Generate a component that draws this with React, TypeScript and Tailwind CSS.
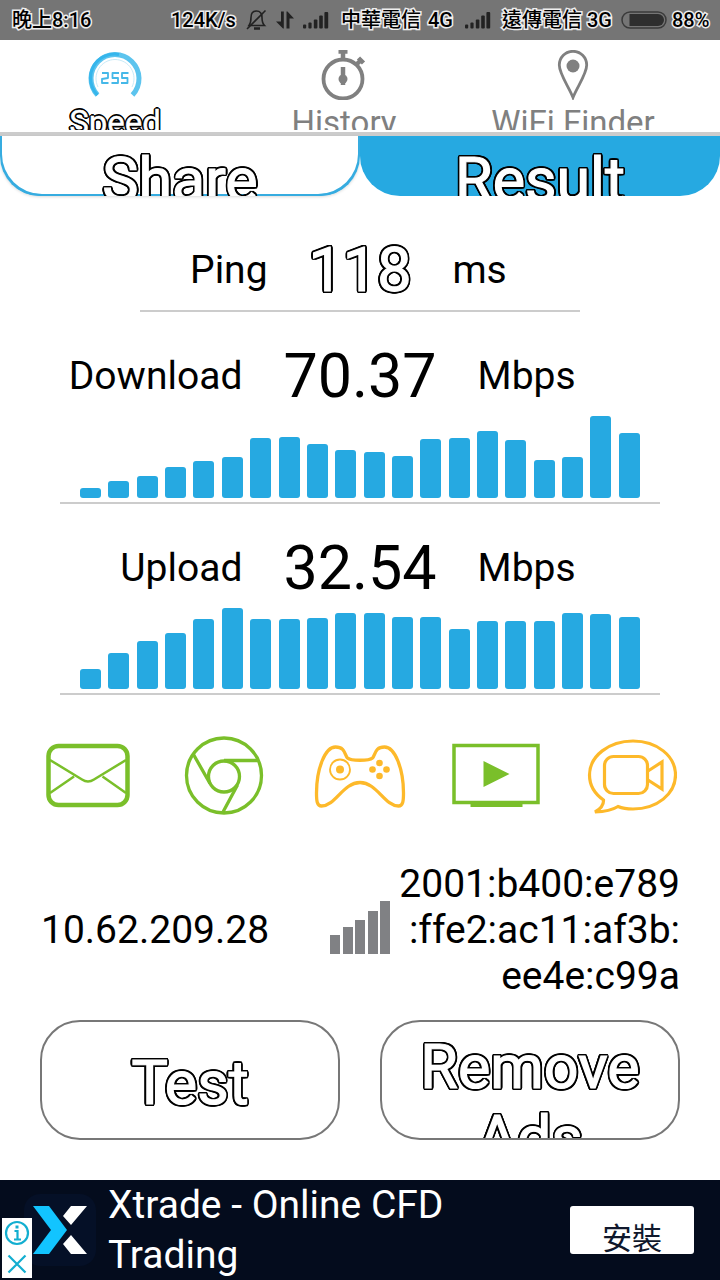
const downloadBars = [10.5, 17, 22, 31, 37.5, 41, 60, 61.5, 54, 48.5, 46, 42, 59.5, 60, 67, 58, 38, 41.5, 82, 65.5];
const uploadBars = [20, 36, 48.5, 56.5, 70, 81.5, 70, 70, 71, 76, 76.5, 72.5, 72.5, 60, 68, 68, 68, 76.5, 75.5, 72.5];

// white glyphs with a black contour
const outline =
  "text-white [-webkit-text-stroke:1.2px_white] [text-shadow:2.4px_0_black,-2.4px_0_black,0_2.4px_black,0_-2.4px_black,1.7px_1.7px_black,-1.7px_1.7px_black,1.7px_-1.7px_black,-1.7px_-1.7px_black,2.2px_0.9px_black,-2.2px_0.9px_black,2.2px_-0.9px_black,-2.2px_-0.9px_black,0.9px_2.2px_black,-0.9px_2.2px_black,0.9px_-2.2px_black,-0.9px_-2.2px_black]";
const statusText =
  "text-black text-[20px] leading-[40px] font-medium whitespace-nowrap [-webkit-text-stroke:3px_#eee] [paint-order:stroke_fill]";

function StatusSignal() {
  return (
    <svg width="26" height="18" viewBox="0 0 26 18" fill="#222">
      <rect x="0" y="13.5" width="3.2" height="4" rx="1" />
      <rect x="5.4" y="11.5" width="3.2" height="6" rx="1" />
      <rect x="10.8" y="8.5" width="3.6" height="9" rx="1" />
      <rect x="16.2" y="4.5" width="3.6" height="13" rx="1" />
      <rect x="21.4" y="1" width="3.8" height="16.5" rx="1" />
    </svg>
  );
}

function StatusBar() {
  return (
    <div className="flex h-10 items-center bg-[#757575] pl-3">
      <span className={`${statusText} w-[159px]`}>晚上8:16</span>
      <span className={`${statusText} w-[75px]`}>124K/s</span>
      {/* muted bell */}
      <svg className="mr-[9px]" width="21" height="22" viewBox="0 0 21 22" fill="none" stroke="#222" strokeWidth="1.6">
        <path d="M3 16.5h15.5c-2-2-2.500-4-2.500-8 0-4-2-6.500-5.500-6.500S5 4.500 5 8.500c0 4-.5 6-2 8z" />
        <path d="M1 20 19.500 1.500" />
        <path d="M8 19.500h6" strokeWidth="2.500" />
      </svg>
      <svg className="mr-[9px]" width="18" height="18" viewBox="0 0 18 18" fill="#222">
        <path d="M5 .5h2.800V17.500H7L0 10.500h5z" />
        <path d="M10.500.5h1L18 7.500h-4.500V17.500h-3z" />
      </svg>
      <StatusSignal />
      <span className={`${statusText} ml-3 w-[87px]`}>中華電信</span>
      <span className={`${statusText} w-[37px]`}>4G</span>
      <StatusSignal />
      <span className={`${statusText} ml-[11px] w-[85px]`}>遠傳電信</span>
      <span className={`${statusText} w-[34px]`}>3G</span>
      <svg width="46" height="18" viewBox="0 0 46 18">
        <rect x="1" y="1" width="44" height="16" rx="8" fill="none" stroke="#3a3a3a" strokeWidth="1.5" />
        <path d="M8.500 3H37a6 6 0 0 1 0 12H8.500z" fill="#2e2e2e" />
      </svg>
      <span className={`${statusText} ml-[5px]`}>88%</span>
    </div>
  );
}

function Tabs() {
  return (
    <div className="grid h-[96px] grid-cols-[230px_228px_1fr] border-b-4 border-[#ccc] text-[33px] leading-[38px] text-[#808080]">
      <div className="flex h-[90px] flex-col items-center overflow-hidden pt-2.5">
        <svg className="shrink-0" width="56" height="50" viewBox="0 0 56 50" fill="none">
          <path d="M10.500 45A24 24 0 1 1 45.500 45" stroke="#5cc4ee" strokeWidth="5" />
          <path d="M10.500 45A24 24 0 0 1 32 4.500" stroke="#35b6ec" strokeWidth="3" />
          <path d="M11 37A19 19 0 1 1 45 37" stroke="#c9eaf8" strokeWidth="1" />
          <g stroke="#45b8e8" strokeWidth="1.8" strokeLinejoin="round">
            <path d="M15 23h6v5l-6 1v4h6.500" />
            <path d="M32 23h-6.500v5H31v5h-6.500" />
            <path d="M41.500 23H35v5h5.500v5H34" />
          </g>
        </svg>
        <div className="mt-1 text-white [-webkit-text-stroke:0.4px_white] [text-shadow:1.8px_0_black,-1.8px_0_black,0_1.8px_black,0_-1.8px_black,1.3px_1.3px_black,-1.3px_1.3px_black,1.3px_-1.3px_black,-1.3px_-1.3px_black]">
          Speed
        </div>
      </div>
      <div className="flex h-[90px] flex-col items-center overflow-hidden pt-2.5">
        <svg className="shrink-0" width="46" height="50" viewBox="0 0 46 50" fill="none" stroke="#808080">
          <circle cx="22" cy="29" r="19.500" strokeWidth="3.800" />
          <path d="M17.500 1.500h9M22 2v8" strokeWidth="4.500" />
          <path d="M35 15l5-5M37.500 8l5 5" strokeWidth="4.500" />
          <path d="M22 17v18" strokeWidth="4.500" />
          <circle cx="22" cy="29" r="4.500" fill="#808080" stroke="none" />
        </svg>
        <div className="mt-1">History</div>
      </div>
      <div className="flex h-[90px] flex-col items-center overflow-hidden pt-2.5 pr-8">
        <svg className="shrink-0" width="32" height="50" viewBox="0 0 32 50">
          <path d="M16 47.500C12 37 2.300 24 2.300 15a13.700 13.700 0 0 1 27.400 0C29.700 24 20 37 16 47.500z" fill="none" stroke="#808080" strokeWidth="2.800" />
          <circle cx="16" cy="16" r="6.500" fill="#808080" />
        </svg>
        <div className="mt-1 whitespace-nowrap">WiFi Finder</div>
      </div>
    </div>
  );
}

function ResultRow({ label, value, unit, outlined }: { label: string; value: string; unit: string; outlined?: boolean }) {
  return (
    <div className="grid h-20 grid-cols-[1fr_auto_1fr] items-center gap-x-[41px] pt-0.5 text-[39px]">
      <div className="text-right">{label}</div>
      <div className={`text-[61px] leading-[72px] ${outlined ? outline : ""}`}>{value}</div>
      <div>{unit}</div>
    </div>
  );
}

function BarChart({ bars }: { bars: number[] }) {
  return (
    <div className="mx-[60px] flex h-[88px] items-end justify-between border-b-2 border-[#ccc] px-5 pb-1">
      {bars.map((h, i) => (
        <div key={i} className="w-[21px] rounded-[3px] bg-[#26a9e1]" style={{ height: h }} />
      ))}
    </div>
  );
}

function UsageIcons() {
  return (
    <div className="mt-[30px] flex h-[100px] items-center pl-[45px]">
      <svg className="mr-[52px]" width="86" height="80" viewBox="0 0 86 80" fill="none" stroke="#7abf2a">
        <rect x="3.500" y="11" width="79" height="59" rx="10" strokeWidth="4.500" />
        <path d="M5 25l32 19.500q6 4 12 0L81 25M5 58l24-16.500M81 58L57.500 41.500" strokeWidth="2.500" />
      </svg>
      <svg className="mr-[48px]" width="82" height="80" viewBox="0 0 82 80" fill="none" stroke="#7abf2a" strokeWidth="3.300">
        <circle cx="41" cy="40.500" r="37.500" />
        <circle cx="41" cy="41.500" r="15.500" />
        <path d="M41 25.500h34M27 48.500L10.500 19.500M54.500 50L40 77" />
      </svg>
      <svg className="mr-[44px]" width="95" height="80" viewBox="1 0 95 80" fill="none" stroke="#fdb92a" strokeWidth="3.300">
        <path d="M35.500 23C39 26 57 26 60.500 23C63.500 20 62.500 12 72.500 12C83 12 91.500 34 91.500 58C91.500 66 91 71 86.500 71C72.500 71 65 47.500 48 47.500C31 47.500 23.500 71 9.500 71C5 71 4.500 66 4.500 58C4.500 34 13 12 23.500 12C33.500 12 32.500 20 35.500 23z" />
        <circle cx="28" cy="34.500" r="10" strokeWidth="1.800" />
        <g fill="#fdb92a" stroke="none">
          <circle cx="28" cy="34.500" r="4" />
          <circle cx="67.500" cy="28" r="3.300" />
          <circle cx="60.500" cy="34.500" r="3.300" />
          <circle cx="74.500" cy="34.500" r="3.300" />
          <circle cx="67.500" cy="41" r="3.300" />
        </g>
      </svg>
      <svg className="mr-[47px]" width="88" height="80" viewBox="0 0 88 80">
        <rect x="2" y="10.500" width="84" height="57" fill="none" stroke="#7abf2a" strokeWidth="3.500" />
        <path d="M18.500 68h52v4h-52zM31.500 26v26l26-13z" fill="#7abf2a" />
      </svg>
      <svg width="90" height="80" viewBox="0 0 90 80" fill="none" stroke="#fdb92a" strokeWidth="3.200">
        <path d="M16.500 65C8 59 2.500 50 2.500 40 2.500 21 22 6 46 6s42.500 15 42.500 34S70 74 46 74q-9 0-15-2.500-8 5-23 5.500 9-5 8.500-12z" />
        <rect x="17.500" y="21.500" width="43" height="37" rx="9" />
        <path d="M61 36l14-9v27l-14-9" />
      </svg>
    </div>
  );
}

function Addresses() {
  return (
    <div className="mt-[35px] flex h-[140px] items-center px-10 text-[39px] leading-[46px]">
      <div className="w-[290px] pl-px">10.62.209.28</div>
      <div className="mb-[5px] flex h-[53px] w-[60px] shrink-0 items-end justify-between">
        <div className="h-[19px] w-2.5 bg-[#808184]" />
        <div className="h-[27px] w-2.5 bg-[#808184]" />
        <div className="h-[34px] w-2.5 bg-[#808184]" />
        <div className="h-[43px] w-2.5 bg-[#808184]" />
        <div className="h-[53px] w-2.5 bg-[#808184]" />
      </div>
      <div className="flex-1 text-right whitespace-nowrap">
        2001:b400:e789
        <br />
        :ffe2:ac11:af3b:
        <br />
        ee4e:c99a
      </div>
    </div>
  );
}

function AdBanner() {
  return (
    <div className="relative flex h-[100px] bg-[#040c1d] text-white">
      <div className="mt-3.5 ml-6 flex h-[72px] w-[72px] items-center justify-center rounded-2xl bg-[#051027]">
        <svg width="54" height="48" viewBox="0 0 54 48">
          <path d="M0 0h16l18 24-18 24H0l18-24z" fill="#12c4ff" />
          <path d="M38 0h16L38 19l-8-9zM38 48h16L38 29l-8 9z" fill="#fff" />
        </svg>
      </div>
      <div className="ml-3 w-[462px] text-[39px] leading-[50px]">
        Xtrade - Online CFD
        <br />
        Trading
      </div>
      <button className="mt-[26px] h-12 w-[124px] overflow-hidden rounded-[3px] bg-white pt-4 text-[30px] leading-[34px] text-[#10182c]">
        安裝
      </button>
      {/* ad choices */}
      <div className="absolute bottom-0.5 left-0.5 flex h-[60px] w-[30px] items-center justify-center bg-white">
        <svg width="26" height="56" viewBox="0 0 26 56" fill="none" stroke="#12aed0" strokeWidth="2.200">
          <circle cx="13" cy="13" r="11" />
          <path d="M10.500 11H13.500v8.500M10 19.500h7" />
          <path d="M13 5.500v3" strokeWidth="3" />
          <path d="M4.500 35.500l17 17M21.500 35.500l-17 17" />
        </svg>
      </div>
    </div>
  );
}

export default function App() {
  return (
    <div className="h-[1280px] w-[720px] overflow-hidden bg-white font-[Roboto,'Noto_Sans_CJK_TC',sans-serif] text-black">
      <StatusBar />
      <Tabs />
      <div className="grid h-[60px] grid-cols-2 text-center text-[61px] leading-[70px]">
        <div className="overflow-hidden rounded-b-[40px] pt-[9px] shadow-[inset_2px_-2px_0_#36ace0,inset_-2px_-2px_0_#36ace0,0_1px_3px_rgba(0,0,0,0.15)]">
          <span className={outline}>Share</span>
        </div>
        <div className="overflow-hidden rounded-b-[40px] bg-[#26a9e1] pt-[9px]">
          <span className={outline}>Result</span>
        </div>
      </div>
      <div className="mx-[140px] mt-[33px] h-[83px] border-b-2 border-[#ccc]">
        <ResultRow label="Ping" value="118" unit="ms" outlined />
      </div>
      <div className="mt-[23px]">
        <ResultRow label="Download" value="70.37" unit="Mbps" />
      </div>
      <div className="mt-px">
        <BarChart bars={downloadBars} />
      </div>
      <div className="mt-[23px]">
        <ResultRow label="Upload" value="32.54" unit="Mbps" />
      </div>
      <BarChart bars={uploadBars} />
      <UsageIcons />
      <Addresses />
      <div className="mt-5 mb-10 flex gap-10 px-10 text-center text-[61px] leading-[71px]">
        <button className={`h-[120px] w-[300px] overflow-hidden rounded-[40px] border-2 border-[#777] pt-1.5 ${outline}`}>
          Test
        </button>
        <button className={`flex h-[120px] w-[300px] items-start justify-center overflow-hidden rounded-[40px] border-2 border-[#777] pt-2.5 ${outline}`}>
          <span>
            Remove
            <br />
            Ads
          </span>
        </button>
      </div>
      <AdBanner />
    </div>
  );
}
